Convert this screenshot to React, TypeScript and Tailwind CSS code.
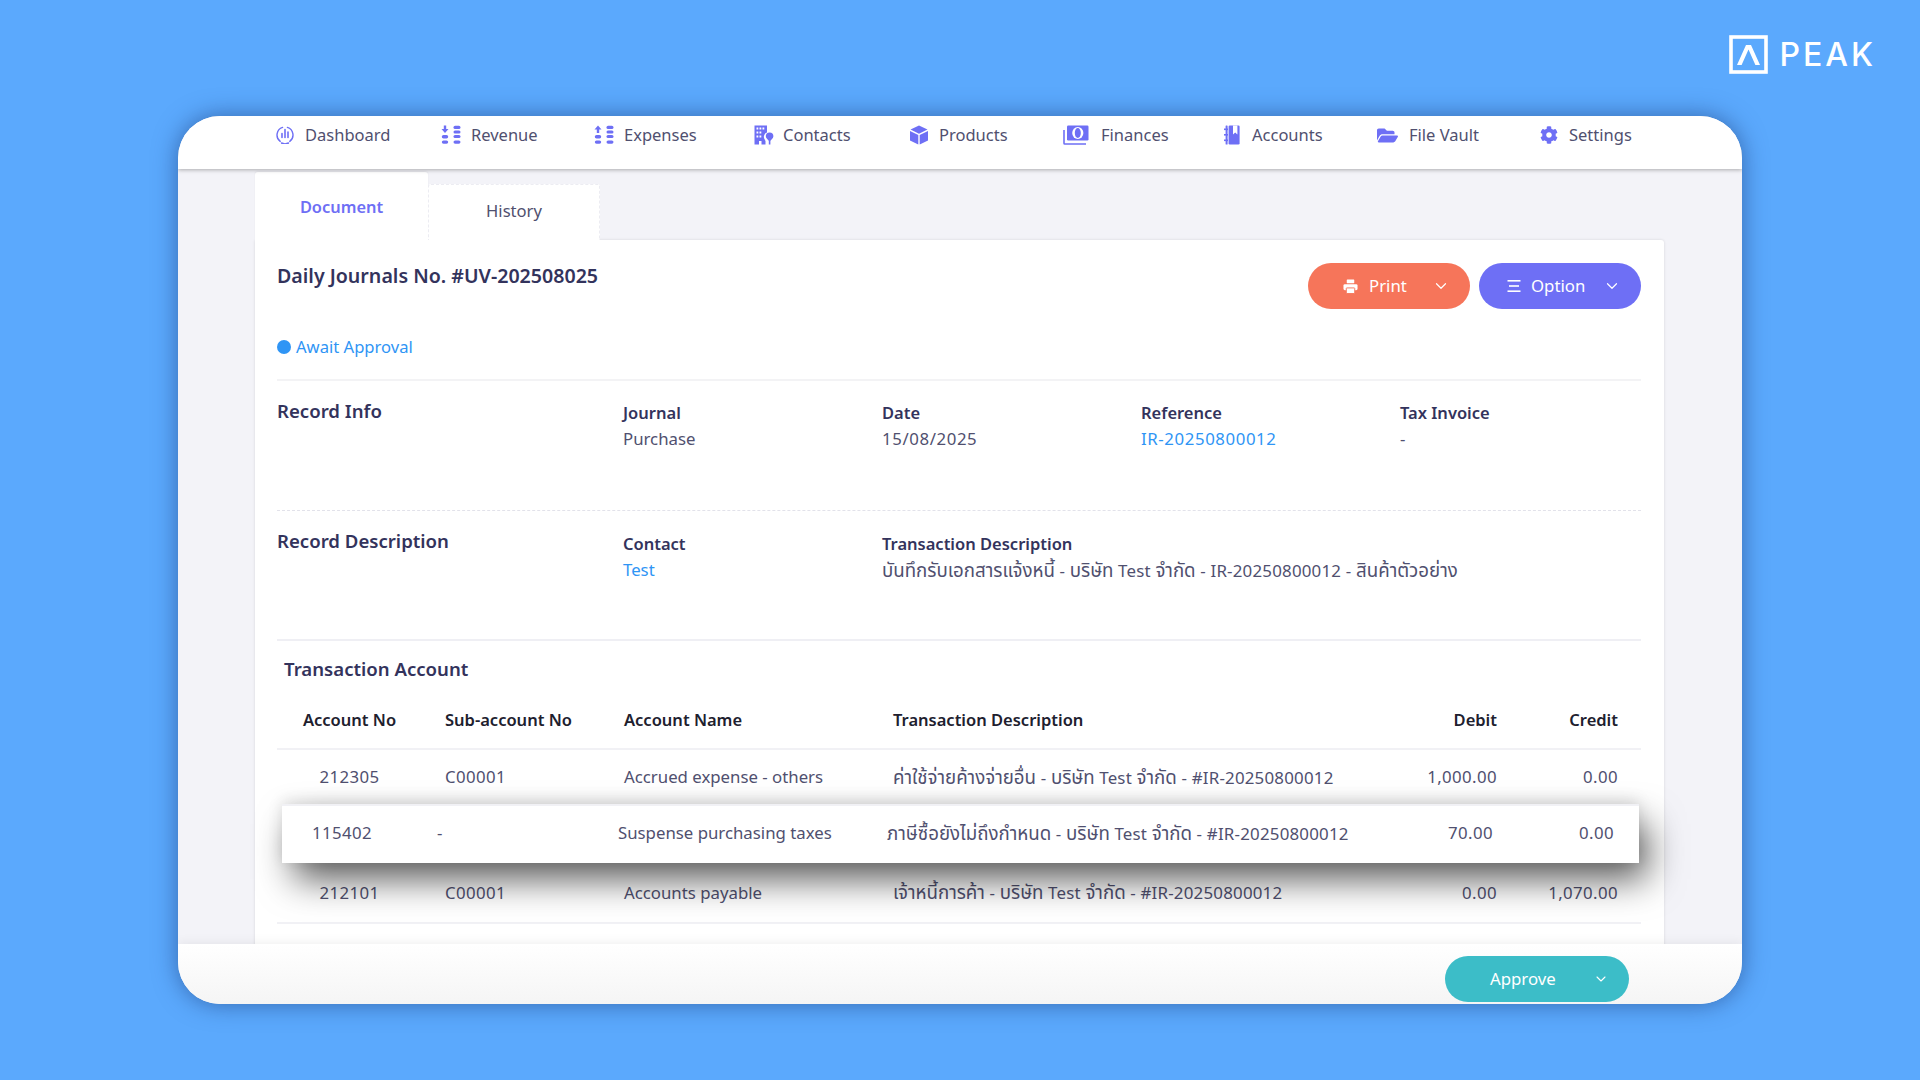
import { ChevronDown } from "lucide-react";
import { FaCog, FaFolderOpen } from "react-icons/fa";

const thaiRow1 = "ค่าใช้จ่ายค้างจ่ายอื่น - บริษัท Test จำกัด - #IR-20250800012";
const thaiRow2 = "ภาษีซื้อยังไม่ถึงกำหนด - บริษัท Test จำกัด - #IR-20250800012";
const thaiRow3 = "เจ้าหนี้การค้า - บริษัท Test จำกัด - #IR-20250800012";

function DashboardIcon() {
  return (
    <svg viewBox="0 0 18 18" className="w-[18px] h-[18px]" fill="none" stroke="currentColor" strokeWidth="1.4" strokeLinecap="round">
      <path d="M6.6 1.4A8 8 0 0 0 4.2 15.4" />
      <path d="M11.4 1.4A8 8 0 0 1 13.8 15.4" />
      <path d="M5.5 17A8 8 0 0 0 12.5 17" />
      <path d="M6 7.5V11.5M9 3.5V11.5M12 6V11.5" strokeWidth="1.6" />
    </svg>
  );
}

function CoinsIcon({ up }: { up?: boolean }) {
  return (
    <svg viewBox="0 0 20 20" className="w-[20px] h-[20px]" fill="currentColor">
      {up ? <path d="M4 0.5 7.5 4.5H5.2V8H2.8V4.5H0.5Z" /> : <path d="M2.8 0.5H5.2V4H7.5L4 8 0.5 4H2.8Z" />}
      <rect x="0.8" y="10" width="6.4" height="3.4" rx="1.7" />
      <rect x="0.8" y="15.4" width="6.4" height="3.4" rx="1.7" />
      <rect x="12.5" y="0.8" width="7" height="3.2" rx="1.6" />
      <rect x="12.5" y="5.4" width="7" height="3" rx="1.5" />
      <rect x="12.5" y="10" width="7" height="3" rx="1.5" />
      <rect x="12.5" y="15.4" width="7" height="3.4" rx="1.7" />
    </svg>
  );
}

function ContactsIcon() {
  return (
    <svg viewBox="0 0 20 20" className="w-[20px] h-[20px]" fill="currentColor">
      <path d="M0.5 0.5H13V7.6A4.4 4.4 0 0 0 10.2 13.5L11.5 16V19.5H7.5V16H5V19.5H0.5Z" />
      <g fill="#fff">
        <rect x="2.5" y="2.5" width="1.8" height="2" />
        <rect x="5.5" y="2.5" width="1.8" height="2" />
        <rect x="8.5" y="2.5" width="1.8" height="2" />
        <rect x="2.5" y="6.5" width="1.8" height="2" />
        <rect x="5.5" y="6.5" width="1.8" height="2" />
        <rect x="2.5" y="10.5" width="1.8" height="2" />
        <rect x="5.5" y="10.5" width="1.8" height="2" />
      </g>
      <path d="M15.6 7.5A3.8 3.8 0 0 1 19.4 11.3C19.4 13.5 16.8 15 16.4 16V19.5H14.8V16C14.4 15 11.8 13.5 11.8 11.3A3.8 3.8 0 0 1 15.6 7.5Z" />
    </svg>
  );
}

function CubeIcon() {
  return (
    <svg viewBox="0 0 20 20" className="w-[20px] h-[20px]" fill="currentColor">
      <path d="M10 0.5 18.5 4.6 10 8.7 1.5 4.6Z" />
      <path d="M1 6 9.3 10V19.5L1 15.5Z" />
      <path d="M19 6 10.7 10V19.5L19 15.5Z" />
    </svg>
  );
}

function FinancesIcon() {
  return (
    <svg viewBox="0 0 26 20" className="w-[26px] h-[20px]">
      <path d="M1 5V18.2A0.8 0.8 0 0 0 1.8 19H23" fill="none" stroke="currentColor" strokeWidth="1.6" />
      <rect x="4" y="0.5" width="21.5" height="15" rx="1.2" fill="currentColor" />
      <ellipse cx="14.8" cy="8" rx="5.6" ry="6" fill="#fff" />
      <ellipse cx="14.8" cy="8" rx="3" ry="5" fill="currentColor" />
    </svg>
  );
}

function AccountsIcon() {
  return (
    <svg viewBox="0 0 16 20" className="w-[16px] h-[20px]" fill="currentColor">
      <rect x="4.6" y="0.5" width="11" height="19" rx="1.2" />
      <rect x="1.6" y="0.5" width="2" height="19" rx="0.6" />
      <rect x="0" y="3.5" width="4" height="1.6" fill="currentColor" />
      <rect x="0" y="9" width="4" height="1.6" fill="currentColor" />
      <rect x="0" y="14.5" width="4" height="1.6" fill="currentColor" />
      <path d="M9 0.5H13.4V9.4L11.2 7.6 9 9.4Z" fill="#fff" />
    </svg>
  );
}

function PrintIcon() {
  return (
    <svg viewBox="0 0 16 16" className="w-[15px] h-[15px]" fill="currentColor">
      <rect x="4" y="0.5" width="8" height="4" rx="0.5" />
      <rect x="0.5" y="5.5" width="15" height="6.5" rx="1.5" />
      <rect x="3.5" y="9.5" width="9" height="6" rx="0.5" stroke="#f6755a" />
    </svg>
  );
}

function OptionIcon() {
  return (
    <svg viewBox="0 0 14 14" className="w-[14px] h-[14px]" fill="currentColor">
      <rect x="0.5" y="1" width="13" height="1.6" />
      <rect x="2" y="6.2" width="10" height="1.6" />
      <rect x="0.5" y="11.4" width="13" height="1.6" />
    </svg>
  );
}

function PeakLogo() {
  return (
    <div className="flex items-center">
      <svg viewBox="0 0 39 39" className="w-[39px] h-[39px]">
        <rect x="2" y="2" width="35" height="35" fill="none" stroke="#fff" strokeWidth="3.6" />
        <path d="M17 10H22L31 30H26.4L19.5 14.6 12.6 30H8Z" fill="#fff" />
      </svg>
      <span className="ml-[11px] font-['Inter',sans-serif] text-[32px] leading-none font-medium tracking-[3px] text-white">PEAK</span>
    </div>
  );
}

// the reference's Thai glyphs run wider than Noto's, so Thai runs get a bigger size
function Mixed({ text }: { text: string }) {
  return (
    <>
      {text.split(/([\u0E00-\u0E7F]+)/).map((part, i) =>
        i % 2 === 1 ? (
          <span key={i} className="text-[18.7px]">{part}</span>
        ) : (
          <span key={i} className="text-[16.9px] tracking-[0.2px]">{part}</span>
        )
      )}
    </>
  );
}

const navItems = [
  { label: "Dashboard", icon: <DashboardIcon />, itemClass: "w-[165px]", iconClass: "w-[29px]" },
  { label: "Revenue", icon: <CoinsIcon />, itemClass: "w-[153px]", iconClass: "w-[30px]" },
  { label: "Expenses", icon: <CoinsIcon up />, itemClass: "w-[160px]", iconClass: "w-[30px]" },
  { label: "Contacts", icon: <ContactsIcon />, itemClass: "w-[155px]", iconClass: "w-[29px]" },
  { label: "Products", icon: <CubeIcon />, itemClass: "w-[154px]", iconClass: "w-[30px]" },
  { label: "Finances", icon: <FinancesIcon />, itemClass: "w-[161px]", iconClass: "w-[38px]" },
  { label: "Accounts", icon: <AccountsIcon />, itemClass: "w-[153px]", iconClass: "w-[28px]" },
  { label: "File Vault", icon: <FaFolderOpen className="w-[21px] h-[19px]" />, itemClass: "w-[163px]", iconClass: "w-[32px]" },
  { label: "Settings", icon: <FaCog className="w-[18px] h-[18px]" />, itemClass: "", iconClass: "w-[29px]" },
];

function InfoField({ label, value, link, numeric }: { label: string; value: React.ReactNode; link?: boolean; numeric?: boolean }) {
  return (
    <div>
      <div className="text-[16.5px] leading-6 font-semibold text-[#33335c]">{label}</div>
      <div className={`mt-[2px] text-[16.8px] leading-6 ${link ? "text-[#2f95f5]" : "text-[#50506f]"} ${numeric ? "tracking-[0.6px]" : ""}`}>{value}</div>
    </div>
  );
}

function TableRow({ cells, dash, head }: { cells: string[]; dash?: boolean; head?: boolean }) {
  const num = head ? "" : "tracking-[0.4px]";
  return (
    <>
      <div className={`text-center ${num}`}>{cells[0]}</div>
      <div className={`${dash ? "pl-[35px]" : "pl-[23px]"} ${num}`}>{cells[1]}</div>
      <div>{cells[2]}</div>
      <div className="whitespace-nowrap">{head ? cells[3] : <Mixed text={cells[3]} />}</div>
      <div className={`text-right ${num}`}>{cells[4]}</div>
      <div className={`text-right ${num}`}>{cells[5]}</div>
    </>
  );
}

export default function App() {
  return (
    <div className="min-h-screen w-full bg-[#5ba9fd] font-['Noto_Sans','Noto_Sans_Thai','Noto_Sans_CJK_SC',sans-serif] overflow-hidden">
      {/* logo strip */}
      <div className="h-[116px] flex justify-end items-start pt-[35px] pr-[44px]">
        <PeakLogo />
      </div>

      {/* app window */}
      <div className="w-[1564px] h-[888px] ml-[178px] rounded-[42px] bg-[#f3f3f8] overflow-hidden flex flex-col shadow-[0_0_24px_rgba(20,50,110,0.55)]">
        <nav className="h-[53px] shrink-0 bg-white flex pl-[98px] pt-[8px] shadow-[0_1px_4px_rgba(0,0,0,0.3)] z-10">
          {navItems.map((item) => (
            <div key={item.label} className={`flex items-start h-[24px] ${item.itemClass}`}>
              <div className={`h-[22px] flex items-center text-[#6e6ff5] ${item.iconClass}`}>{item.icon}</div>
              <span className="text-[16.5px] leading-[22px] text-[#50506f] whitespace-nowrap">{item.label}</span>
            </div>
          ))}
        </nav>

        <main className="flex-1 min-h-0 pl-[77px] pt-[3px] overflow-hidden">
          <div className="flex items-end h-[68px]">
            <div className="w-[173px] h-[68px] bg-white rounded-t-[3px] pt-[23px] text-center text-[16.4px] leading-6 font-semibold text-[#6e6ff5] shadow-[0_-1px_2px_rgba(0,0,0,0.06)]">
              Document
            </div>
            <div className="w-[172px] h-[56px] bg-white rounded-t-[3px] border-x border-t border-dashed border-[#ececf2] pt-[14px] text-center text-[16.6px] leading-6 text-[#50506f]">
              History
            </div>
          </div>

          <section className="w-[1409px] h-[760px] bg-white rounded-tr-[3px] px-[22px] pt-[23px] pr-[23px] shadow-[0_0_3px_rgba(0,0,0,0.12)]">
            <div className="flex justify-between h-[46px]">
              <h1 className="-mt-[1px] text-[19.6px] leading-7 font-semibold text-[#33335c]">Daily Journals No. #UV-202508025</h1>
              <div className="flex gap-[9px]">
                <button className="w-[162px] h-[46px] rounded-full bg-[#f6755a] text-white flex items-center pl-[35px] text-[16.8px]">
                  <span className="mr-[11px]"><PrintIcon /></span>
                  Print
                  <ChevronDown className="w-[18px] h-[18px] ml-[25px]" strokeWidth={1.6} />
                </button>
                <button className="w-[162px] h-[46px] rounded-full bg-[#6e6ff5] text-white flex items-center pl-[28px] text-[16.8px]">
                  <OptionIcon />
                  <span className="ml-[10px]">Option</span>
                  <ChevronDown className="w-[18px] h-[18px] ml-[18px]" strokeWidth={1.6} />
                </button>
              </div>
            </div>

            <div className="mt-[26px] h-6 flex items-center text-[16.6px] text-[#2f95f5]">
              <span className="w-[14px] h-[14px] rounded-full bg-[#2f95f5] mr-[5px]" />
              Await Approval
            </div>

            <div className="mt-[20px] h-[131px] border-t-2 border-[#f3f3f5] pt-[20px] grid grid-cols-[346px_259px_259px_259px_1fr]">
              <h2 className="text-[18.6px] leading-7 font-semibold text-[#33335c] -mt-[4px]">Record Info</h2>
              <InfoField label="Journal" value="Purchase" />
              <InfoField label="Date" value="15/08/2025" numeric />
              <InfoField label="Reference" value="IR-20250800012" link numeric />
              <InfoField label="Tax Invoice" value="-" />
            </div>

            <div className="h-[129px] border-t border-dashed border-[#e2e2ea] pt-[21px] grid grid-cols-[346px_259px_1fr]">
              <h2 className="text-[18.6px] leading-7 font-semibold text-[#33335c] -mt-[5px]">Record Description</h2>
              <InfoField label="Contact" value="Test" link />
              <InfoField label="Transaction Description" value={<Mixed text="บันทึกรับเอกสารแจ้งหนี้ - บริษัท Test จำกัด - IR-20250800012 - สินค้าตัวอย่าง" />} />
            </div>

            <div className="border-t-2 border-[#efeff4]">
              <h2 className="ml-[7px] mt-[14px] h-7 text-[18.6px] leading-7 font-semibold text-[#33335c]">Transaction Account</h2>
            </div>

            <div className="mt-[20px] text-[16.8px] text-[#50506f]">
              <div className="h-[47px] pb-[10px] grid grid-cols-[145px_202px_269px_1fr_130px_121px] items-center pr-[23px] border-b-2 border-[#f1f1f5] font-semibold text-[16.5px] text-[#20202e]">
                <TableRow head cells={["Account No", "Sub-account No", "Account Name", "Transaction Description", "Debit", "Credit"]} />
              </div>
              <div className="h-[54px] grid grid-cols-[145px_202px_269px_1fr_130px_121px] items-center pr-[23px]">
                <TableRow cells={["212305", "C00001", "Accrued expense - others", thaiRow1, "1,000.00", "0.00"]} />
              </div>
              <div className="relative z-10 ml-[5px] mr-[2px] h-[59px] pb-[3px] bg-white border-t-2 border-[#f1f1f5] grid grid-cols-[120px_216px_269px_1fr_130px_121px] items-center pr-[25px] shadow-[0_-4px_14px_rgba(0,0,0,0.1),10px_18px_36px_-2px_rgba(0,0,0,0.65)]">
                <TableRow dash cells={["115402", "-", "Suspense purchasing taxes", thaiRow2, "70.00", "0.00"]} />
              </div>
              <div className="h-[61px] grid grid-cols-[145px_202px_269px_1fr_130px_121px] items-center pr-[23px] border-b-2 border-[#f1f1f5]">
                <TableRow cells={["212101", "C00001", "Accounts payable", thaiRow3, "0.00", "1,070.00"]} />
              </div>
            </div>
          </section>
        </main>

        <footer className="relative z-10 h-[60px] shrink-0 bg-gradient-to-b from-white to-[#f5f5f5] flex justify-end pt-[12px] pr-[113px] shadow-[0_-2px_10px_rgba(0,0,0,0.06)]">
          <button className="w-[184px] h-[46px] rounded-full bg-[#3cbdc8] text-white flex items-center pl-[45px] text-[16.8px]">
            Approve
            <ChevronDown className="w-[16px] h-[16px] ml-[37px]" strokeWidth={1.6} />
          </button>
        </footer>
      </div>
    </div>
  );
}
